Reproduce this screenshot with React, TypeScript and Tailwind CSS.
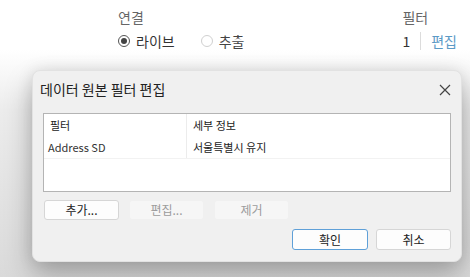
import React from 'react';

const font = { fontFamily: '"Noto Sans CJK KR", "Noto Sans", sans-serif' };

const Radio = ({ checked, label }: { checked?: boolean; label: string }) => (
  <div className="flex items-center gap-[6px]">
    <span
      className={`w-[12px] h-[12px] rounded-full border flex items-center justify-center ${
        checked ? 'border-[#555]' : 'border-[#d0d0d0]'
      }`}
    >
      {checked && <span className="w-[6px] h-[6px] rounded-full bg-[#444]" />}
    </span>
    <span className={checked ? 'text-[#333]' : 'text-[#444]'}>{label}</span>
  </div>
);

const Btn = ({ label, disabled, primary }: { label: string; disabled?: boolean; primary?: boolean }) => (
  <button
    className={`h-full rounded-[3px] text-[12px] flex items-center justify-center ${
      disabled
        ? 'w-[75px] bg-[#f6f6f6] text-[#9c9c9c] border border-[#f0f0f0]'
        : primary
        ? 'w-[76px] bg-[#fdfdfd] text-[#222] border border-[#5fa0d8]'
        : 'w-[75px] bg-[#fdfdfd] text-[#222] border border-[#d6d6d6]'
    }`}
  >
    {label}
  </button>
);

export default function App() {
  return (
    <div
      className="w-[470px] h-[277px] overflow-hidden flex flex-col bg-[linear-gradient(to_bottom,#ffffff_50px,#ececec_110px,#dadada_277px)]"
      style={font}
    >
      {/* top settings */}
      <div className="h-[70px] shrink-0 flex pl-[118px] pr-[13px] pt-[8px] text-[14px] leading-[18px]">
        <div className="flex flex-col gap-[6px]">
          <span className="text-[#666]">연결</span>
          <div className="flex items-center gap-[26px]">
            <Radio checked label="라이브" />
            <Radio label="추출" />
          </div>
        </div>
        <div className="flex-1" />
        <div className="flex flex-col gap-[6px]">
          <span className="text-[#666]">필터</span>
          <div className="flex items-center">
            <span className="text-[#333]">1</span>
            <span className="w-px h-[18px] bg-[#dcdcdc] mx-[10px]" />
            <span className="text-[#5b9ac6]">편집</span>
          </div>
        </div>
      </div>

      {/* dialog */}
      <div className="ml-[32px] w-[430px] h-[192px] shrink-0 bg-[#f0f0f0] rounded-[8px] border border-[#e2e2e2] shadow-[0_14px_28px_rgba(0,0,0,0.25),0_0_16px_rgba(0,0,0,0.1)] flex flex-col">
        <div className="h-[37px] shrink-0 flex items-center justify-between pl-[7px] pr-[10px]">
          <span className="text-[14px] text-[#222]">데이터 원본 필터 편집</span>
          <svg width="12" height="12" viewBox="0 0 12 12">
            <path d="M1 1L11 11M11 1L1 11" stroke="#444" strokeWidth="1.2" />
          </svg>
        </div>
        <div className="px-[10px] pt-[5px] flex flex-col">
          <div className="h-[79px] bg-white border border-[#b4b4b4] text-[11px] text-[#222] flex flex-col">
            <div className="flex h-[22px] items-center">
              <div className="w-[143px] h-full flex items-center pl-[6px] border-r border-[#ececec]">필터</div>
              <div className="flex-1 pl-[6px]">세부 정보</div>
            </div>
            <div className="flex h-[23px] items-center border-b border-[#f2f2f2]">
              <div className="w-[143px] h-full flex items-center pl-[4px] border-r border-[#ececec] text-[#333]">Address SD</div>
              <div className="flex-1 pl-[6px]">서울특별시 유지</div>
            </div>
          </div>
          <div className="mt-[8px] h-[20px] flex gap-[10px] pl-px">
            <Btn label="추가..." />
            <Btn label="편집..." disabled />
            <Btn label="제거" disabled />
          </div>
          <div className="mt-[9px] h-[21px] flex justify-end gap-[8px]">
            <Btn label="확인" primary />
            <Btn label="취소" />
          </div>
        </div>
      </div>
    </div>
  );
}
